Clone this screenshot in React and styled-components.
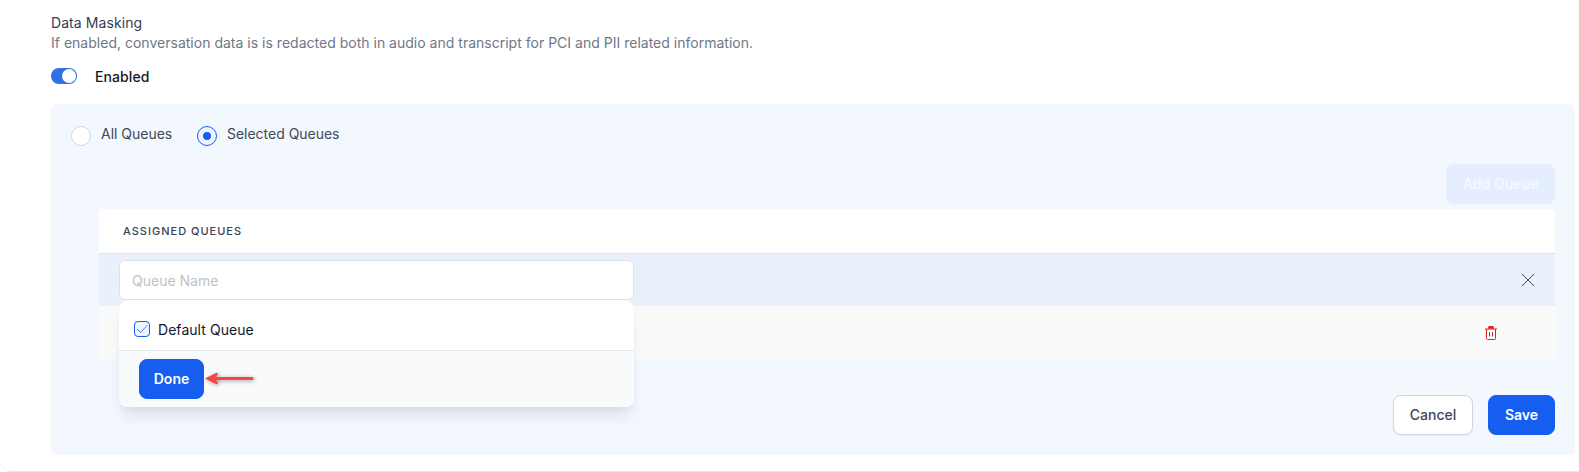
import React from "react";
import styled, { createGlobalStyle } from "styled-components";

const GlobalStyle = createGlobalStyle`
  *, *::before, *::after { box-sizing: border-box; }
  body { margin: 0; background: #fff; font-family: Inter, sans-serif; font-size: 14px; line-height: 20px; color: #424956; overflow: hidden; }
  button, input { font: inherit; }
`;

const Card = styled.main`
  width: 1600px;
  height: 472px;
  padding: 13px 25px 0 51px;
  border-bottom: 1px solid #e8e8e9;
  border-bottom-left-radius: 12px;
`;

const Title = styled.h2`
  margin: 0;
  font-size: 14px;
  font-weight: 400;
  line-height: 20px;
  letter-spacing: 0.08px;
  color: #344054;
`;

const Description = styled.p`
  margin: 0;
  letter-spacing: 0.01px;
  color: #6f7787;
`;

const ToggleRow = styled.div`
  display: flex;
  align-items: flex-start;
  gap: 18px;
  height: 36px;
  margin-top: 15px;
`;

const Switch = styled.span`
  display: flex;
  justify-content: flex-end;
  width: 26px;
  height: 16px;
  padding: 1px;
  border-radius: 8px;
  background: #2c72e4;
`;

const Knob = styled.span`
  width: 14px;
  height: 14px;
  border-radius: 50%;
  background: #fff;
`;

const ToggleLabel = styled.span`
  font-weight: 500;
  line-height: 18px;
  letter-spacing: 0.1px;
  color: #16181d;
`;

const Panel = styled.section`
  width: 1524px;
  height: 351px;
  padding: 20px;
  border-radius: 6px;
  background: #f3f8ff;
`;

const RadioGroup = styled.div`
  display: flex;
  gap: 25px;
  height: 40px;
`;

const Option = styled.label`
  display: flex;
  gap: 10px;
  width: ${(p) => p.$width};
  line-height: 20px;
  letter-spacing: -0.02px;
  white-space: nowrap;
`;

const Radio = styled.span`
  display: grid;
  place-items: center;
  flex: none;
  width: 20px;
  height: 20px;
  margin-top: 2px;
  border: 1px solid ${(p) => (p.$checked ? "#155eef" : "#d0d5dd")};
  border-radius: 50%;
  background: ${(p) => (p.$checked ? "#eff4ff" : "#fff")};
  &::after {
    content: "";
    width: 8px;
    height: 8px;
    border-radius: 50%;
    background: ${(p) => (p.$checked ? "#155eef" : "transparent")};
  }
`;

const Toolbar = styled.div`
  display: flex;
  justify-content: flex-end;
  height: 45px;
`;

const Button = styled.button`
  width: ${(p) => p.$width};
  height: 40px;
  padding: 0;
  border: 1px solid #155eef;
  border-radius: 8px;
  background: #155eef;
  color: #fff;
  font-weight: 600;
  white-space: nowrap;
  &:disabled {
    border-color: #e5eeff;
    background: #e5eeff;
    color: #f5f9ff;
  }
`;

const OutlineButton = styled(Button)`
  border-color: #d0d5dd;
  background: #fff;
  color: #3f4754;
  font-weight: 500;
  box-shadow: 0 1px 2px rgba(16, 24, 40, 0.05);
`;

const Table = styled.div`
  margin-left: 28px;
  border-radius: 4px 4px 0 0;
`;

const HeaderRow = styled.div`
  height: 45px;
  padding-left: 24px;
  border-bottom: 1px solid #e1e4ea;
  border-radius: 4px 4px 0 0;
  background: #fff;
  font-size: 11px;
  font-weight: 500;
  line-height: 44px;
  letter-spacing: 1px;
  color: #3b4252;
`;

const EditRow = styled.div`
  display: flex;
  justify-content: space-between;
  align-items: flex-start;
  height: 52px;
  padding: 6px 20px 0 20px;
  background: #e9f0fc;
`;

const QueueRow = styled.div`
  display: flex;
  justify-content: flex-end;
  height: 54px;
  padding: 20px 57px 0 0;
  background: #fafafa;
`;

const IconButton = styled.button`
  display: block;
  height: ${(p) => p.$size}px;
  margin-top: ${(p) => p.$top || 0}px;
  padding: 0;
  border: 0;
  background: none;
  color: ${(p) => p.$color};
  svg { display: block; }
`;

const Combo = styled.div`
  position: relative;
  width: 515px;
`;

const Field = styled.input`
  display: block;
  width: 515px;
  height: 40px;
  padding: 0 12px;
  border: 1px solid #e0e2e6;
  border-radius: 6px;
  background: #fff;
  outline: none;
  &::placeholder { color: #bfc1c5; opacity: 1; }
`;

const Menu = styled.div`
  position: absolute;
  top: 40px;
  left: 0;
  width: 515px;
  height: 107px;
  border-radius: 10px 10px 8px 8px;
  background: #fff;
  box-shadow: 0 12px 16px -4px rgba(16, 24, 40, 0.1), 0 4px 6px -2px rgba(16, 24, 40, 0.05);
`;

const MenuOption = styled.label`
  display: flex;
  gap: 8px;
  height: 50px;
  padding: 21px 15px 0;
  letter-spacing: 0.05px;
  color: #101828;
  line-height: 18px;
`;

const Checkbox = styled.span`
  width: 16px;
  height: 16px;
  border: 1px solid #155eef;
  border-radius: 4px;
  background: #eff4ff;
  svg { display: block; }
`;

const MenuFooter = styled.div`
  display: flex;
  gap: 1px;
  height: 57px;
  padding: 8px 20px;
  border-top: 1px solid #e4e7ec;
  border-radius: 0 0 8px 8px;
  background: #f9fafc;
`;

const Pointer = styled.svg`
  margin-top: 8px;
  overflow: visible;
  filter: drop-shadow(1px 1px 2px rgba(0, 0, 0, 0.38));
`;

const Actions = styled.div`
  display: flex;
  justify-content: flex-end;
  gap: 15px;
  margin-top: 35px;
`;

export default function App() {
  return (
    <>
      <GlobalStyle />
      <Card>
        <Title>Data Masking</Title>
        <Description>
          If enabled, conversation data is is redacted both in audio and transcript for PCI and PII related information.
        </Description>
        <ToggleRow>
          <Switch role="switch" aria-checked="true"><Knob /></Switch>
          <ToggleLabel>Enabled</ToggleLabel>
        </ToggleRow>
        <Panel>
          <RadioGroup>
            <Option $width="101px"><Radio />All Queues</Option>
            <Option><Radio $checked />Selected Queues</Option>
          </RadioGroup>
          <Toolbar>
            <Button $width="109px" disabled>Add Queue</Button>
          </Toolbar>
          <Table>
            <HeaderRow>ASSIGNED QUEUES</HeaderRow>
            <EditRow>
              <Combo>
                <Field placeholder="Queue Name" />
                <Menu>
                  <MenuOption>
                    <Checkbox>
                      <svg width="14" height="14" viewBox="0 0 14 14" fill="none" stroke="#155eef" strokeWidth="0.8">
                        <path d="M2 7.2 5.6 10.4 12.5 3.2" />
                      </svg>
                    </Checkbox>
                    Default Queue
                  </MenuOption>
                  <MenuFooter>
                    <Button $width="65px">Done</Button>
                    <Pointer width="50" height="24" viewBox="0 0 50 24">
                      <path d="M11 11.5H47" stroke="#fb4347" strokeWidth="3" strokeLinecap="round" />
                      <path d="M0 11.5 11.5 5.8Q13.3 6 12.7 7.5L10 11.5 12.7 15.5Q13.3 17 11.5 17.2Z" fill="#fb4347" />
                    </Pointer>
                  </MenuFooter>
                </Menu>
              </Combo>
              <IconButton $size={14} $top={13} $color="#424956" aria-label="Close">
                <svg width="14" height="14" viewBox="0 0 14 14" fill="none" stroke="currentColor" strokeWidth="1">
                  <path d="M1 1 13 13M13 1 1 13" />
                </svg>
              </IconButton>
            </EditRow>
            <QueueRow>
              <IconButton $size={14} $color="#e01e26" aria-label="Delete">
                <svg width="14" height="14" viewBox="0 0 14 14" fill="none" stroke="currentColor">
                  <path d="M1 3H13M2.5 3V12.5Q2.5 13.5 3.5 13.5H10.5Q11.5 13.5 11.5 12.5V3M5.5 6V10.5M8.5 6V10.5" />
                  <path d="M4 2.7V1.5Q4 0 5.5 0H8.5Q10 0 10 1.5V2.7Z" fill="currentColor" stroke="none" />
                </svg>
              </IconButton>
            </QueueRow>
          </Table>
          <Actions>
            <OutlineButton $width="80px">Cancel</OutlineButton>
            <Button $width="67px">Save</Button>
          </Actions>
        </Panel>
      </Card>
    </>
  );
}
